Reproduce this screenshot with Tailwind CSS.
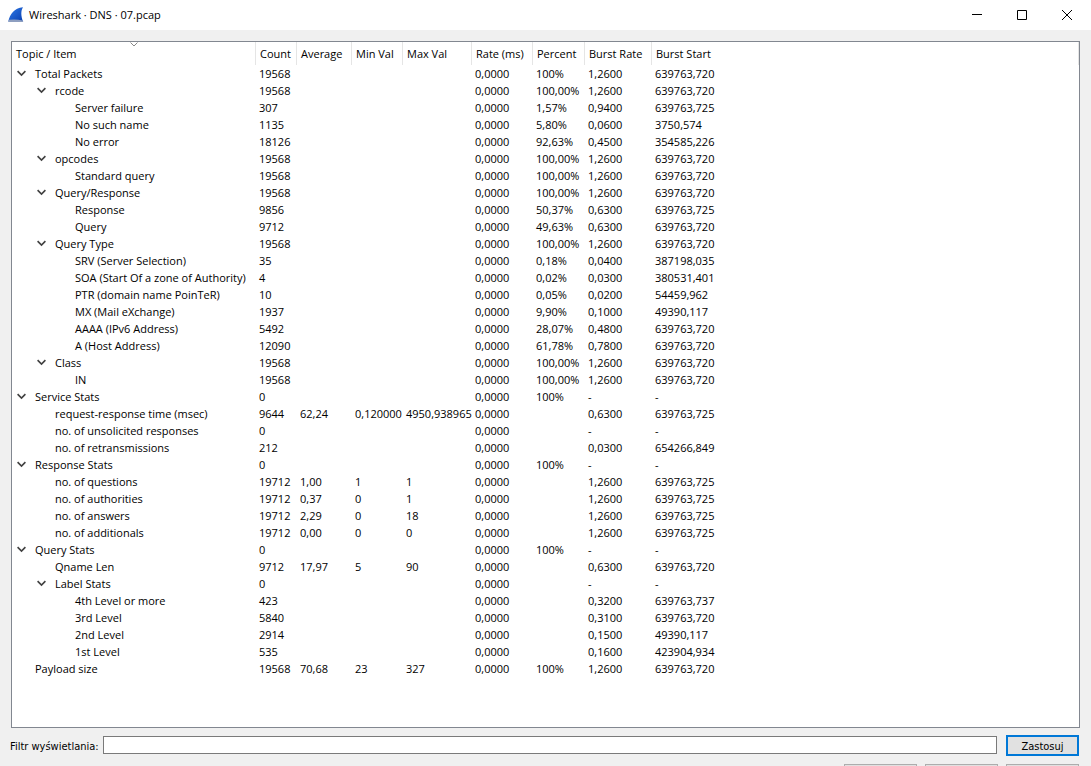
<!DOCTYPE html>
<html lang="pl">
<head>
<meta charset="utf-8">
<title>Wireshark · DNS · 07.pcap</title>
<script src="https://cdn.jsdelivr.net/npm/@tailwindcss/browser@4"></script>
</head>
<body class="flex h-screen flex-col overflow-hidden bg-[#f0f0f0] font-['Open_Sans','Noto_Sans',sans-serif] text-[11px] text-black">
<header class="flex h-[30px] shrink-0 items-center bg-white pr-px pl-2">
  <svg class="mr-[5px] h-4 w-4" viewBox="0 0 16 16" aria-hidden="true">
    <defs><linearGradient id="fin" x1="0" y1="0" x2="1" y2="1"><stop offset="0" stop-color="#2f7be8"/><stop offset="1" stop-color="#0a3fb0"/></linearGradient></defs>
    <path d="M.3 14.500C2 7 6 1 15 .2C12.600 4 13 9 15 14.500Z" fill="url(#fin)"/>
    <path d="M.3 14.300L1 12.800Q8 12 14.700 13.400L15.300 15H.3Z" fill="#8e9fc0"/>
  </svg>
  <h1>Wireshark · DNS · 07.pcap</h1>
  <div class="ml-auto flex h-full">
    <button class="flex w-[45px] items-center justify-center" aria-label="Minimalizuj"><svg class="h-[10px] w-[10px]" viewBox="0 0 10 10" stroke="#000"><path d="M0 4.500H10"/></svg></button>
    <button class="flex w-[45px] items-center justify-center pb-px" aria-label="Maksymalizuj"><svg class="h-[10px] w-[10px]" viewBox="0 0 10 10" fill="none" stroke="#000"><path d="M.5 .5H9.500V9.500H.5Z"/></svg></button>
    <button class="flex w-[46px] items-center justify-center pb-px" aria-label="Zamknij"><svg class="h-[10px] w-[10px]" viewBox="0 0 10 10" stroke="#000"><path d="M0 0L10 10M10 0L0 10"/></svg></button>
  </div>
</header>
<main class="flex min-h-0 flex-1 flex-col pt-[11px] pr-[11px] pl-[11px]">
  <div class="min-h-0 flex-1 overflow-hidden border border-[#828790] bg-white">
    <table class="w-full table-fixed border-separate border-spacing-0 text-left whitespace-nowrap">
      <colgroup><col class="w-[244px]"><col class="w-[41px]"><col class="w-[55px]"><col class="w-[51px]"><col class="w-[69px]"><col class="w-[61px]"><col class="w-[52px]"><col class="w-[67px]"><col></colgroup>
      <thead>
        <tr id="head" class="h-[23px] leading-4"></tr>
      </thead>
      <tbody id="rows"></tbody>
    </table>
  </div>
  <form class="mt-[7px] flex h-[21px] shrink-0 items-start pr-px font-['DejaVu_Sans_Condensed','DejaVu_Sans',sans-serif]" onsubmit="return false">
    <label for="filter" class="-ml-px w-[93px] shrink-0 pt-px leading-[21px]">Filtr wyświetlania:</label>
    <input id="filter" type="text" class="mt-px h-[18px] min-w-0 flex-1 border border-[#7a7a7a] bg-white px-1 outline-none">
    <button class="ml-[9px] h-[21px] w-[73px] border-2 border-[#0078d7] bg-[#e1e1e1] pt-0.5 leading-[15px]">Zastosuj</button>
  </form>
  <div class="mt-2 flex h-[2px] shrink-0 justify-end gap-2 overflow-hidden pr-px">
    <button class="h-[21px] w-[73px] border border-[#adadad] bg-[#e1e1e1]" aria-label="Kopiuj"></button>
    <button class="h-[21px] w-[73px] border border-[#adadad] bg-[#e1e1e1]" aria-label="Zapisz jako"></button>
    <button class="h-[21px] w-[73px] border border-[#adadad] bg-[#e1e1e1]" aria-label="Zamknij okno"></button>
  </div>
</main>
<script>
const heads = ['Topic / Item','Count','Average','Min Val','Max Val','Rate (ms)','Percent','Burst Rate','Burst Start'];
document.getElementById('head').innerHTML = heads.map((h, i) =>
  '<th scope="col" class="relative border-r border-[#e5e5e5] p-0 pl-1 font-normal">' + h +
  (i ? '' : '<svg class="absolute top-0 left-1/2 -ml-1 h-[5px] w-[8px]" viewBox="0 0 8 5" fill="none" stroke="#888"><path d="M.5 .5L4 4L7.500 .5"/></svg>') + '</th>').join('');

// level | expandable | name | count | average | min | max | percent | burst rate | burst start
const data = `0|+|Total Packets|19568||||100%|1,2600|639763,720
1|+|rcode|19568||||100,00%|1,2600|639763,720
2||Server failure|307||||1,57%|0,9400|639763,725
2||No such name|1135||||5,80%|0,0600|3750,574
2||No error|18126||||92,63%|0,4500|354585,226
1|+|opcodes|19568||||100,00%|1,2600|639763,720
2||Standard query|19568||||100,00%|1,2600|639763,720
1|+|Query/Response|19568||||100,00%|1,2600|639763,720
2||Response|9856||||50,37%|0,6300|639763,725
2||Query|9712||||49,63%|0,6300|639763,720
1|+|Query Type|19568||||100,00%|1,2600|639763,720
2||SRV (Server Selection)|35||||0,18%|0,0400|387198,035
2||SOA (Start Of a zone of Authority)|4||||0,02%|0,0300|380531,401
2||PTR (domain name PoinTeR)|10||||0,05%|0,0200|54459,962
2||MX (Mail eXchange)|1937||||9,90%|0,1000|49390,117
2||AAAA (IPv6 Address)|5492||||28,07%|0,4800|639763,720
2||A (Host Address)|12090||||61,78%|0,7800|639763,720
1|+|Class|19568||||100,00%|1,2600|639763,720
2||IN|19568||||100,00%|1,2600|639763,720
0|+|Service Stats|0||||100%|-|-
1||request-response time (msec)|9644|62,24|0,120000|4950,938965||0,6300|639763,725
1||no. of unsolicited responses|0|||||-|-
1||no. of retransmissions|212|||||0,0300|654266,849
0|+|Response Stats|0||||100%|-|-
1||no. of questions|19712|1,00|1|1||1,2600|639763,725
1||no. of authorities|19712|0,37|0|1||1,2600|639763,725
1||no. of answers|19712|2,29|0|18||1,2600|639763,725
1||no. of additionals|19712|0,00|0|0||1,2600|639763,725
0|+|Query Stats|0||||100%|-|-
1||Qname Len|9712|17,97|5|90||0,6300|639763,720
1|+|Label Stats|0|||||-|-
2||4th Level or more|423|||||0,3200|639763,737
2||3rd Level|5840|||||0,3100|639763,720
2||2nd Level|2914|||||0,1500|49390,117
2||1st Level|535|||||0,1600|423904,934
0||Payload size|19568|70,68|23|327|100%|1,2600|639763,720`;
const indent = ['pl-[5px]', 'pl-[25px]', 'pl-[45px]'];
const chevron = '<button class="block h-[9px] w-[9px]" aria-label="Zwiń"><svg class="h-[9px] w-[9px]" viewBox="0 0 9 9" fill="none" stroke="#404040" stroke-width="1.600"><path d="M.6 2.100L4.500 6L8.400 2.100"/></svg></button>';
document.getElementById('rows').innerHTML = data.split('\n').map(line => {
  const [level, open, name, count, avg, min, max, pct, rate, start] = line.split('|');
  return '<tr class="h-[17px] leading-[17px]"><td class="p-0"><div class="flex items-center ' + indent[level] + '"><span class="w-[18px] shrink-0">' +
    (open ? chevron : '') + '</span>' + name + '</div></td>' +
    [count, avg, min, max, '0,0000', pct, rate, start].map(v => '<td class="p-0 pl-[3px]">' + v + '</td>').join('') + '</tr>';
}).join('');
</script>
</body>
</html>
